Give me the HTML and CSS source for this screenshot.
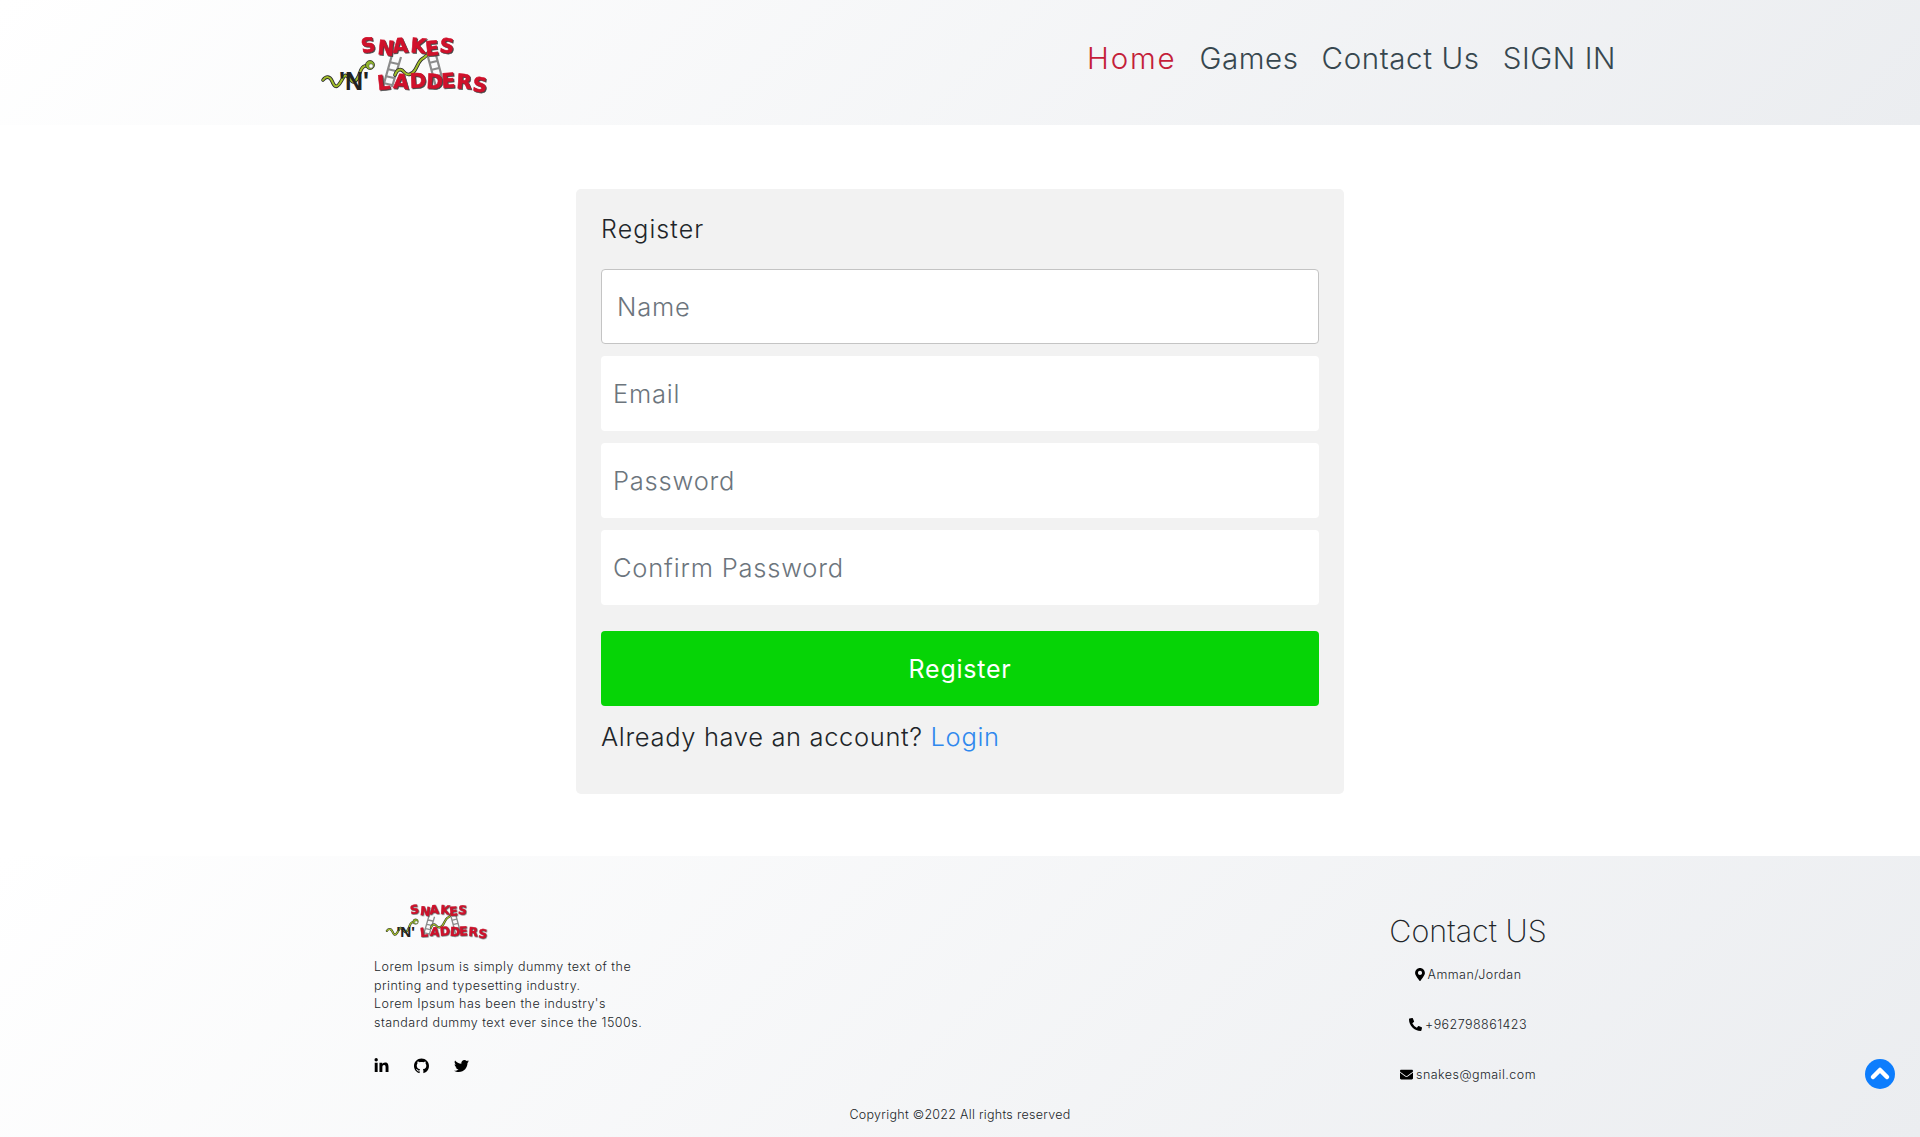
FILE: index.html
```html
<!DOCTYPE html>
<html lang="en">
<head>
  <meta charset="UTF-8">
  <meta name="viewport" content="width=device-width, initial-scale=1.0">
  <title>Register</title>
  <link rel="stylesheet" href="styles.css">
</head>
<body>
  <!-- logo drawing, used in header and footer -->
  <svg class="defs" aria-hidden="true">
    <symbol id="logo" viewBox="0 0 170 62">
      <g class="ladder">
        <path d="M72 22 L63 54 M81 24 L72 54 M69 29 L78 31 M67 36 L76 38 M65 43 L74 45 M63 50 L72 52"/>
        <path d="M108 24 L116 54 M116 22 L124 52 M109 30 L117 28 M111 37 L119 35 M113 44 L121 42"/>
      </g>
      <path class="snake" d="M3 47 C6 43 10 43 12 48 S16 56 20 50 S24 40 28 44 S33 52 37 46 S40 34 45 33 L51 32"/>
      <path class="snake-line" d="M3 47 C6 43 10 43 12 48 S16 56 20 50 S24 40 28 44 S33 52 37 46 S40 34 45 33 L51 32"/>
      <circle class="snake-head" cx="50" cy="32" r="4.5"/>
      <circle class="snake-eye" cx="51" cy="33" r="2.2"/>
      <path class="snake" d="M75 42 C77 36 81 35 84 39 S92 42 95 37 S99 28 102 26 S106 24 108 20"/>
      <path class="snake-line" d="M75 42 C77 36 81 35 84 39 S92 42 95 37 S99 28 102 26 S106 24 108 20"/>
      <text class="logo-n" x="19" y="57">'N'</text>
      <text class="logo-word" x="42 57 73 90 106 119" y="20 21 20 19 23 19" rotate="-8 6 -4 5 -6 6">SNAKES</text>
      <text class="logo-word" x="58 73 90 106 122 136 152" y="57 55 55 55 55 55 58" rotate="-6 4 -3 3 -4 4 6">LADDERS</text>
    </symbol>
  </svg>

  <header class="site-header">
    <div class="header-inner">
      <a class="logo" href="#"><svg><use href="#logo"/></svg></a>
      <nav class="nav">
        <a class="active" href="#">Home</a>
        <a href="#">Games</a>
        <a href="#">Contact Us</a>
        <a href="#">SIGN IN</a>
      </nav>
    </div>
  </header>

  <main class="main">
    <div class="card">
      <h1>Register</h1>
      <form class="form">
        <input class="field field-focus" type="text" placeholder="Name">
        <input class="field" type="email" placeholder="Email">
        <input class="field" type="password" placeholder="Password">
        <input class="field" type="password" placeholder="Confirm Password">
        <button class="submit" type="submit">Register</button>
      </form>
      <p class="switch">Already have an account? <a href="#">Login</a></p>
    </div>
  </main>

  <footer class="site-footer">
    <div class="footer-top">
      <div class="about">
        <svg class="footer-logo"><use href="#logo"/></svg>
        <p>Lorem Ipsum is simply dummy text of the<br>printing and typesetting industry.<br>Lorem Ipsum has been the industry's<br>standard dummy text ever since the 1500s.</p>
        <div class="social">
          <a href="#"><svg viewBox="0 0 448 512"><path d="M100.28 448H7.4V148.9h92.88zM53.79 108.1C24.09 108.1 0 83.5 0 53.8a53.79 53.79 0 0 1 107.58 0c0 29.7-24.1 54.3-53.79 54.3zM447.9 448h-92.68V302.4c0-34.7-.7-79.2-48.29-79.2-48.29 0-55.69 37.7-55.69 76.7V448h-92.78V148.9h89.08v40.8h1.3c12.4-23.5 42.69-48.3 87.88-48.3 94 0 111.28 61.9 111.28 142.3V448z"/></svg></a>
          <a href="#"><svg viewBox="0 0 16 16"><path d="M8 0C3.58 0 0 3.58 0 8c0 3.54 2.29 6.53 5.47 7.59.4.07.55-.17.55-.38 0-.19-.01-.82-.01-1.49-2.01.37-2.53-.49-2.69-.94-.09-.23-.48-.94-.82-1.13-.28-.15-.68-.52-.01-.53.63-.01 1.08.58 1.23.82.72 1.21 1.87.87 2.33.66.07-.52.28-.87.51-1.07-1.78-.2-3.64-.89-3.64-3.95 0-.87.31-1.59.82-2.15-.08-.2-.36-1.02.08-2.12 0 0 .67-.21 2.2.82.64-.18 1.32-.27 2-.27.68 0 1.36.09 2 .27 1.53-1.04 2.2-.82 2.2-.82.44 1.1.16 1.92.08 2.12.51.56.82 1.27.82 2.15 0 3.07-1.87 3.75-3.65 3.95.29.25.54.73.54 1.48 0 1.07-.01 1.93-.01 2.2 0 .21.15.46.55.38A8.013 8.013 0 0 0 16 8c0-4.42-3.58-8-8-8z"/></svg></a>
          <a href="#"><svg viewBox="0 0 512 512"><path d="M459.37 151.716c.325 4.548.325 9.097.325 13.645 0 138.72-105.583 298.558-298.558 298.558-59.452 0-114.68-17.219-161.137-47.106 8.447.974 16.568 1.299 25.34 1.299 49.055 0 94.213-16.568 130.274-44.832-46.132-.975-84.792-31.188-98.112-72.772 6.498.974 12.995 1.624 19.818 1.624 9.421 0 18.843-1.3 27.614-3.573-48.081-9.747-84.143-51.98-84.143-102.985v-1.299c13.969 7.797 30.214 12.67 47.431 13.319-28.264-18.843-46.781-51.005-46.781-87.391 0-19.492 5.197-37.36 14.294-52.954 51.655 63.675 129.3 105.258 216.365 109.807-1.624-7.797-2.599-15.918-2.599-24.04 0-57.828 46.782-104.934 104.934-104.934 30.213 0 57.502 12.67 76.67 33.137 23.715-4.548 46.456-13.32 66.599-25.34-7.798 24.366-24.366 44.833-46.132 57.827 21.117-2.273 41.584-8.122 60.426-16.243-14.292 20.791-32.161 39.308-52.628 54.253z"/></svg></a>
        </div>
      </div>
      <div class="contact">
        <h2>Contact US</h2>
        <p><svg class="icon-pin" viewBox="0 0 384 512"><path d="M172.268 501.67C26.97 291.031 0 262.469 0 192 0 85.961 85.961 0 192 0s192 85.961 192 192c0 70.469-26.97 99.031-172.268 309.67-9.535 13.774-29.93 13.773-39.464 0zM192 272c44.183 0 80-35.817 80-80s-35.817-80-80-80-80 35.817-80 80 35.817 80 80 80z"/></svg>Amman/Jordan</p>
        <p><svg viewBox="0 0 512 512"><path d="M497.39 361.8l-112-48a24 24 0 0 0-28 6.9l-49.6 60.6A370.66 370.66 0 0 1 130.6 204.11l60.6-49.6a23.94 23.94 0 0 0 6.9-28l-48-112A24.16 24.16 0 0 0 122.6.61l-104 24A24 24 0 0 0 0 48c0 256.5 207.9 464 464 464a24 24 0 0 0 23.4-18.6l24-104a24.29 24.29 0 0 0-14.01-27.6z"/></svg>+962798861423</p>
        <p><svg viewBox="0 0 512 512"><path d="M502.3 190.8c3.9-3.1 9.7-.2 9.7 4.7V400c0 26.5-21.5 48-48 48H48c-26.5 0-48-21.5-48-48V195.6c0-5 5.7-7.8 9.7-4.7 22.4 17.4 52.1 39.5 154.1 113.6 21.1 15.4 56.7 47.8 92.2 47.6 35.7.3 72-32.8 92.3-47.6 102-74.1 131.6-96.3 154-113.7zM256 320c23.2.4 56.6-29.2 73.4-41.4 132.7-96.3 142.8-104.7 173.4-128.7 5.8-4.5 9.2-11.5 9.2-18.9v-19c0-26.5-21.5-48-48-48H48C21.5 64 0 85.5 0 112v19c0 7.4 3.4 14.3 9.2 18.9 30.6 23.9 40.7 32.4 173.4 128.7 16.8 12.2 50.2 41.8 73.4 41.4z"/></svg>snakes@gmail.com</p>
      </div>
    </div>
    <p class="copyright">Copyright ©2022 All rights reserved</p>
    <a class="to-top" href="#"><svg viewBox="0 0 30 30"><circle cx="15" cy="15" r="15"/><path d="M8 18 L15 11 L22 18"/></svg></a>
  </footer>
</body>
</html>
```
FILE: styles.css
```css
* {
  box-sizing: border-box;
}

body {
  margin: 0;
  font-family: "Inter", "Open Sans", sans-serif;
  color: #212529;
  background-color: #fff;
}

a {
  text-decoration: none;
}

.defs {
  display: none;
}

/* Header */
.site-header {
  height: 125px;
  background: linear-gradient(135deg, #fff, #ebedf0);
}

.header-inner {
  display: flex;
  justify-content: space-between;
  width: 1320px;
  margin: 0 auto;
  padding: 33px 4px 0 20px;
}

.logo svg {
  display: block;
  width: 170px;
  height: 62px;
}

.nav {
  display: flex;
  gap: 23px;
  margin-top: 5px;
  font-size: 29.5px;
  font-weight: 300;
  line-height: 40px;
  letter-spacing: 0.6px;
}

.nav a {
  color: #37474f;
}

.nav a.active {
  color: #c41e3a;
  letter-spacing: 1.8px;
}

/* logo parts */
.ladder path {
  fill: none;
  stroke: #8b8b8b;
  stroke-width: 2.2;
}

.snake {
  fill: none;
  stroke: #2a2a2a;
  stroke-width: 3.6;
  stroke-linecap: round;
}

.snake-line {
  fill: none;
  stroke: #a3bf2a;
  stroke-width: 2;
  stroke-linecap: round;
}

.snake-head {
  fill: #8fb52c;
  stroke: #2a2a2a;
  stroke-width: 0.8;
}

.snake-eye {
  fill: #fff;
  stroke: #333;
  stroke-width: 0.5;
}

.logo-n {
  font-family: "Liberation Sans", sans-serif;
  font-size: 25px;
  font-weight: 700;
  fill: #222;
}

.logo-word {
  font-family: "DejaVu Sans", sans-serif;
  font-size: 20px;
  font-weight: 700;
  fill: #d0112b;
  stroke: #d0112b;
  stroke-width: 0.6;
  filter: drop-shadow(1px 1px 0 #444);
}

/* Register card */
.main {
  padding: 64px 0 62px;
}

.card {
  width: 768px;
  height: 605px;
  margin: 0 auto;
  padding: 25px;
  background-color: #f2f2f2;
  border-radius: 5px;
}

.card h1 {
  margin: 0 0 25px;
  font-size: 25px;
  font-weight: 300;
  line-height: 30px;
  letter-spacing: 1.1px;
}

.form {
  display: flex;
  flex-direction: column;
  gap: 12px;
}

.field {
  width: 100%;
  height: 75px;
  padding: 0 12px;
  border: none;
  border-radius: 4px;
  background-color: #fff;
  font-family: inherit;
  font-size: 25.5px;
  font-weight: 300;
  letter-spacing: 0.8px;
}

.field-focus {
  padding: 0 15px;
  border: 1px solid #c4c4c4;
}

.field::placeholder {
  color: #6c757d;
  opacity: 1;
}

.submit {
  height: 75px;
  margin-top: 14px;
  border: none;
  border-radius: 4px;
  background-color: #06d406;
  color: #fff;
  font-family: inherit;
  font-size: 25px;
  font-weight: 400;
  letter-spacing: 0.75px;
  cursor: pointer;
}

.switch {
  margin: 12px 0 0;
  font-size: 25.5px;
  font-weight: 300;
  line-height: 38px;
  letter-spacing: 0.65px;
}

.switch a {
  color: #2f88ee;
}

/* Footer */
.site-footer {
  position: relative;
  height: 281px;
  background: linear-gradient(135deg, #fff, #ebedf0);
}

.footer-top {
  display: flex;
  justify-content: space-between;
  height: 250px;
  padding: 46px 302px 0 374px;
}

.footer-logo {
  display: block;
  width: 104px;
  height: 38px;
  margin-left: 11px;
}

.about p {
  margin: 18px 0 0;
  font-size: 12.5px;
  font-weight: 300;
  line-height: 18.5px;
  letter-spacing: 0.47px;
}

.social {
  display: flex;
  gap: 25px;
  margin-top: 26px;
}

.social svg {
  display: block;
  width: 15px;
  height: 16px;
}

.contact {
  width: 300px;
  margin-top: 7px;
  text-align: center;
}

.contact h2 {
  margin: 0 0 9px;
  font-size: 30.5px;
  font-weight: 200;
  line-height: 44px;
}

.contact p {
  display: flex;
  justify-content: center;
  align-items: center;
  gap: 3px;
  height: 50px;
  margin: 0;
  padding-bottom: 26px;
  font-size: 12.5px;
  font-weight: 300;
  letter-spacing: 0.45px;
}

.contact svg {
  width: 13px;
  height: 13px;
}

.contact svg.icon-pin {
  width: 10px;
}

.copyright {
  margin: 0;
  font-size: 12.5px;
  font-weight: 300;
  line-height: 18px;
  letter-spacing: 0.28px;
  text-align: center;
}

.to-top {
  position: absolute;
  right: 25px;
  top: 203px;
  width: 30px;
  height: 30px;
}

.to-top svg {
  display: block;
  width: 30px;
  height: 30px;
}

.to-top circle {
  fill: #0d7dfd;
}

.to-top path {
  fill: none;
  stroke: #fff;
  stroke-width: 4.5;
  stroke-linecap: round;
  stroke-linejoin: round;
}
```
